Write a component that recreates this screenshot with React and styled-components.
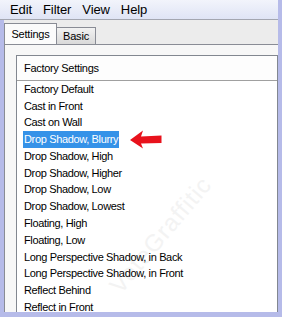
import React from "react";
import styled, { createGlobalStyle } from "styled-components";

const items = [
  "Factory Default",
  "Cast in Front",
  "Cast on Wall",
  "Drop Shadow, Blurry",
  "Drop Shadow, High",
  "Drop Shadow, Higher",
  "Drop Shadow, Low",
  "Drop Shadow, Lowest",
  "Floating, High",
  "Floating, Low",
  "Long Perspective Shadow, in Back",
  "Long Perspective Shadow, in Front",
  "Reflect Behind",
  "Reflect in Front",
];

const App = () => {
  return (
    <>
      <GlobalStyle />
      <Frame>
        <MenuBar>
          <span>Edit</span>
          <span>Filter</span>
          <span>View</span>
          <span>Help</span>
        </MenuBar>
        <TabStrip>
          <Tab $active>Settings</Tab>
          <Tab>Basic</Tab>
        </TabStrip>
        <Panel>
          <ListBox>
            <Watermark>VeteGraffitic</Watermark>
            <Header>Factory Settings</Header>
            <List>
              {items.map((name, i) => (
                <Row key={name}>
                  <Label $selected={i === 3}>{name}</Label>
                  {i === 3 && (
                    <Arrow width="32" height="19" viewBox="0 0 32 19">
                      <path d="M0 10 L13 0.5 L11 6.5 L31.5 5.5 L31.5 13 L11 13.5 L13 18.5 Z" fill="#e8121c" />
                    </Arrow>
                  )}
                </Row>
              ))}
            </List>
          </ListBox>
        </Panel>
      </Frame>
    </>
  );
};

const GlobalStyle = createGlobalStyle`
  body {
    margin: 0;
    background: #b6bbe9;
  }
`;

const Frame = styled.div`
  width: 282px;
  height: 317px;
  box-sizing: border-box;
  padding: 0 4px 5px 4px;
  background: #b6bbe9;
  display: flex;
  flex-direction: column;
  overflow: hidden;
  font-family: "Liberation Sans", Arial, sans-serif;
  color: #000;
`;

const MenuBar = styled.div`
  height: 19px;
  flex-shrink: 0;
  display: flex;
  align-items: center;
  gap: 11px;
  margin-left: -4px;
  padding-left: 10px;
  font-size: 13px;
  letter-spacing: -0.1px;
  background: linear-gradient(#f2f4fb, #dfe4f5);
  border-bottom: 1px solid #a3a6b0;
`;

const TabStrip = styled.div`
  height: 24px;
  flex-shrink: 0;
  display: flex;
  align-items: flex-end;
  background: #ececec;
`;

const Tab = styled.div`
  box-sizing: border-box;
  height: ${(p) => (p.$active ? "21px" : "17px")};
  width: ${(p) => (p.$active ? "53px" : "39px")};
  border: 1px solid #898c95;
  border-bottom: none;
  border-left: ${(p) => (p.$active ? "1px solid #898c95" : "none")};
  background: ${(p) => (p.$active ? "#fbfbfb" : "linear-gradient(#f2f2f2, #d9d9d9)")};
  font-size: 11px;
  letter-spacing: -0.2px;
  display: flex;
  align-items: center;
  justify-content: center;
  padding-bottom: ${(p) => (p.$active ? "1px" : "0")};
`;

const Panel = styled.div`
  flex: 1;
  min-height: 0;
  display: flex;
  background: #f7f7f7;
  border-top: 1px solid #898c95;
  border-left: 1px solid #898c95;
  padding: 10px 0 0 11px;
`;

const ListBox = styled.div`
  flex: 1;
  position: relative;
  overflow: hidden;
  background: #fff;
  border: 1px solid #828790;
  border-bottom: none;
`;

const Header = styled.div`
  position: relative;
  height: 24px;
  display: flex;
  align-items: center;
  padding-left: 7px;
  font-size: 11px;
  letter-spacing: -0.3px;
  border-bottom: 1px solid #a0a0a0;
  background: #fdfdfd;
`;

const List = styled.div`
  position: relative;
  padding-left: 6px;
`;

const Row = styled.div`
  height: 16.77px;
  display: flex;
  align-items: center;
  font-size: 11px;
  letter-spacing: -0.35px;
  white-space: nowrap;
`;

const Label = styled.span`
  padding: 0 1px;
  line-height: 17px;
  background: ${(p) => (p.$selected ? "#3592e8" : "transparent")};
  color: ${(p) => (p.$selected ? "#fff" : "#000")};
`;

const Arrow = styled.svg`
  margin-left: 11px;
  flex-shrink: 0;
`;

const Watermark = styled.div`
  position: absolute;
  left: 72px;
  top: 165px;
  font-size: 24px;
  letter-spacing: 1px;
  color: #f3f3f3;
  transform: rotate(-50deg);
  pointer-events: none;
`;

export default App;
